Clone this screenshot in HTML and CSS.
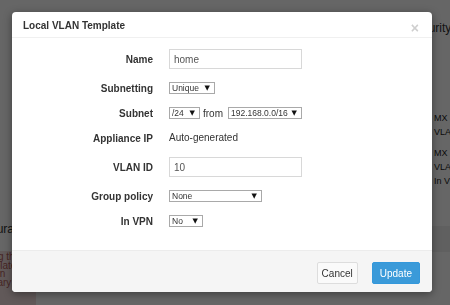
FILE: index.html
```html
<!DOCTYPE html>
<html lang="en">
<head>
    <meta charset="UTF-8">
    <meta name="viewport" content="width=device-width, initial-scale=1.0">
    <title>Local VLAN Template</title>
    <link rel="stylesheet" href="styles.css">
</head>
<body>
    <!-- Page behind the dialog -->
    <div class="page">
        <div class="page-left">
            <div class="page-text">Configura</div>
            <div class="alert">
                <p>Using th</p>
                <p>template</p>
                <p>may n</p>
                <p>primary</p>
                <p>each</p>
            </div>
        </div>
        <div class="page-main"></div>
        <div class="page-right">
            <div class="page-text top">Security</div>
            <div class="page-group">
                <div class="small">MX</div>
                <div class="small">VLAN</div>
            </div>
            <div class="page-group">
                <div class="small">MX</div>
                <div class="small">VLAN</div>
                <div class="small">In VPN</div>
            </div>
            <div class="page-band"></div>
        </div>
    </div>

    <div class="backdrop"></div>

    <!-- Dialog -->
    <div class="modal">
        <div class="modal-header">
            <h3>Local VLAN Template</h3>
            <span class="close">&times;</span>
        </div>

        <form class="modal-body">
            <label for="name">Name</label>
            <div><input type="text" id="name" class="text-input" value="home"></div>

            <label for="subnetting">Subnetting</label>
            <div><span class="select w-unique"><select id="subnetting"><option>Unique</option></select></span></div>

            <label for="mask">Subnet</label>
            <div class="inline">
                <span class="select w-mask"><select id="mask"><option>/24</option></select></span>
                <span class="from">from</span>
                <span class="select w-pool"><select id="pool"><option>192.168.0.0/16</option></select></span>
            </div>

            <label>Appliance IP</label>
            <div class="plain">Auto-generated</div>

            <label for="vlan_id">VLAN ID</label>
            <div><input type="text" id="vlan_id" class="text-input" value="10"></div>

            <label for="policy">Group policy</label>
            <div><span class="select w-policy"><select id="policy"><option>None</option></select></span></div>

            <label for="vpn">In VPN</label>
            <div><span class="select w-vpn"><select id="vpn"><option>No</option></select></span></div>
        </form>

        <div class="modal-footer">
            <button type="button" class="btn">Cancel</button>
            <button type="button" class="btn btn-primary">Update</button>
        </div>
    </div>
</body>
</html>
```

FILE: styles.css
```css
/* General Styles */
html, body {
    height: 100%;
}

body {
    margin: 0;
    font-family: "Liberation Sans", Arial, sans-serif;
    background: #fff;
    color: #333;
    overflow: hidden;
}

/* Page behind the dialog */
.page {
    display: flex;
    height: 305px;
}

.page-left {
    width: 36px;
    padding-top: 222px;
    overflow: hidden;
    white-space: nowrap;
}

.page-left .page-text {
    margin-left: -38px;
}

.page-main {
    flex: 1;
}

.page-right {
    width: 42px;
    overflow: hidden;
    white-space: nowrap;
}

.page-text {
    font-size: 12px;
    line-height: 14px;
}

.page-text.top {
    margin-top: 21px;
}

.page-group {
    margin-top: 76px;
    padding-left: 26px;
}

.page-group + .page-group {
    margin-top: 7px;
}

.small {
    font-size: 9px;
    line-height: 14px;
    color: #222;
}

.page-band {
    margin-top: 38px;
    height: 26px;
    background: #f0f0f0;
}

.alert {
    margin-top: 15px;
    background: #f2dede;
    color: #b0605c;
    padding-top: 2px;
    height: 56px;
}

.alert p {
    margin: 0 0 0 -22px;
    font-size: 10px;
    line-height: 8.5px;
}

.backdrop {
    position: fixed;
    inset: 0;
    background: rgba(0, 0, 0, 0.6);
}

/* Dialog */
.modal {
    position: absolute;
    left: 12px;
    top: 12px;
    width: 420px;
    background: #fff;
    border-radius: 4px;
    box-shadow: 0 2px 8px rgba(0, 0, 0, 0.4);
    overflow: hidden;
}

.modal-header {
    display: flex;
    align-items: center;
    justify-content: space-between;
    height: 25px;
    padding: 0 13px 0 11px;
    border-bottom: 1px solid #f0f0f0;
}

.modal-header h3 {
    margin: 0;
    font-size: 10px;
    font-weight: bold;
    color: #333;
    padding-top: 1px;
}

.close {
    font-size: 14px;
    font-weight: bold;
    color: #cfcfcf;
    padding-top: 6px;
}

/* Form grid */
.modal-body {
    display: grid;
    grid-template-columns: 141px 1fr;
    column-gap: 16px;
    row-gap: 13px;
    align-items: center;
    padding: 11px 0 23px;
}

.modal-body label {
    text-align: right;
    font-size: 10px;
    font-weight: bold;
    color: #333;
}

.modal-body > div {
    display: flex;
    align-items: center;
}

.inline {
    gap: 3px;
}

.from {
    font-size: 10px;
    color: #333;
    margin-right: 2px;
}

.plain {
    font-size: 10px;
    line-height: 12px;
    color: #333;
}

.text-input {
    box-sizing: border-box;
    width: 133px;
    height: 20px;
    padding: 0 4px;
    border: 1px solid #d8d8d8;
    font-family: inherit;
    font-size: 10px;
    color: #555;
    outline: none;
}

/* Selects */
.select {
    position: relative;
    display: inline-block;
    box-sizing: border-box;
    height: 12px;
    border: 1px solid #a9a9a9;
    background: #fff;
}

.select select {
    appearance: none;
    -webkit-appearance: none;
    border: none;
    background: transparent;
    width: 100%;
    height: 10px;
    padding: 0 0 0 2px;
    margin: 0;
    font-family: inherit;
    font-size: 8.5px;
    line-height: 10px;
    color: #333;
    display: block;
    outline: none;
}

.select::after {
    content: "\25BC";
    position: absolute;
    right: 4px;
    top: 0;
    font-family: "DejaVu Sans", sans-serif;
    font-size: 7px;
    line-height: 10px;
    color: #111;
    pointer-events: none;
}

.w-unique { width: 46px; }
.w-mask { width: 31px; }
.w-pool { width: 74px; }
.w-policy { width: 93px; }
.w-vpn { width: 34px; }

/* Footer */
.modal-footer {
    display: flex;
    justify-content: flex-end;
    gap: 14px;
    height: 42px;
    box-sizing: border-box;
    padding: 11px 12px 0;
    background: #f5f5f5;
    border-top: 1px solid #ececec;
}

.btn {
    height: 22px;
    padding: 0 4px;
    border: 1px solid #ddd;
    border-radius: 2px;
    background: #fafafa;
    color: #333;
    font-family: inherit;
    font-size: 10px;
    cursor: pointer;
}

.btn-primary {
    padding: 0 7px;
    border-color: #3498db;
    background: #3a9ad9;
    color: #fff;
}
```
